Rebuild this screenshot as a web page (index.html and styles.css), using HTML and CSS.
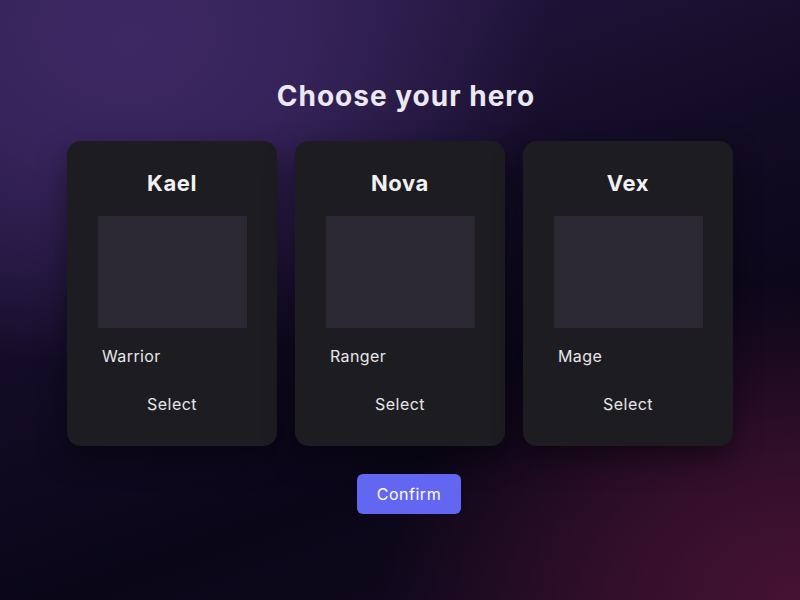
FILE: index.html
```html
<!DOCTYPE html>
<html lang="en">
<head>
    <meta charset="UTF-8">
    <title>Choose your hero</title>
    <link rel="stylesheet" href="styles.css">
</head>
<body>
<div class="page">
    <h1 class="title">Choose your hero</h1>
    <div class="heroes">
        <div class="card">
            <h2 class="name">Kael</h2>
            <div class="portrait"></div>
            <p class="role">Warrior</p>
            <button class="select">Select</button>
        </div>
        <div class="card">
            <h2 class="name">Nova</h2>
            <div class="portrait"></div>
            <p class="role">Ranger</p>
            <button class="select">Select</button>
        </div>
        <div class="card">
            <h2 class="name">Vex</h2>
            <div class="portrait"></div>
            <p class="role">Mage</p>
            <button class="select">Select</button>
        </div>
    </div>
    <button class="confirm">Confirm</button>
</div>
</body>
</html>
```

FILE: styles.css
```css
*{
    padding: 0;
    margin: 0;
    box-sizing: border-box;
}
html,body{
    height: 100%;
}
body{
    font-family: Inter, "Liberation Sans", sans-serif;
    color: #ececf1;
    background-color: #0c0719;
    background-image:
        radial-gradient(ellipse 420px 330px at 130px 40px, rgba(62,40,100,1) 0%, rgba(58,38,96,0.85) 40%, rgba(40,26,72,0) 100%),
        radial-gradient(ellipse 420px 320px at 800px 600px, rgba(70,18,52,1) 0%, rgba(58,16,46,0.8) 45%, rgba(40,12,36,0) 100%),
        linear-gradient(160deg, #2a1a4a 0%, #120b24 45%, #0a0618 70%, #150a20 100%);
}
.page{
    display: flex;
    flex-direction: column;
    align-items: center;
    padding-top: 79px;
}
.title{
    font-size: 28px;
    line-height: 34px;
    font-weight: 700;
    letter-spacing: 1px;
    margin-left: 12px;
    color: #ebe8f0;
}
.heroes{
    display: flex;
    gap: 18px;
    margin-top: 28px;
}
.card{
    width: 210px;
    height: 305px;
    background: #1d1d21;
    border-radius: 14px;
    padding: 28px 30px 0;
    display: flex;
    flex-direction: column;
    box-shadow: 0 12px 30px rgba(0,0,0,0.45);
}
.name{
    font-size: 22px;
    line-height: 28px;
    font-weight: 700;
    letter-spacing: 0.6px;
    text-align: center;
    color: #f1f1f4;
}
.portrait{
    height: 112px;
    margin-top: 19px;
    margin-left: 1px;
    background: #2b2833;
}
.role{
    font-size: 16px;
    line-height: 20px;
    letter-spacing: 0.4px;
    margin-top: 18px;
    padding-left: 5px;
    color: #e6e6ea;
}
.select{
    align-self: center;
    margin-top: 28px;
    background: none;
    border: none;
    font-family: inherit;
    font-size: 16px;
    line-height: 20px;
    letter-spacing: 0.5px;
    color: #e6e6ea;
    cursor: pointer;
}
.confirm{
    margin-top: 28px;
    margin-left: 18px;
    width: 104px;
    height: 40px;
    border: none;
    border-radius: 6px;
    background: #6366f1;
    color: #fff;
    font-family: inherit;
    font-size: 16px;
    letter-spacing: 0.5px;
    cursor: pointer;
}
```
